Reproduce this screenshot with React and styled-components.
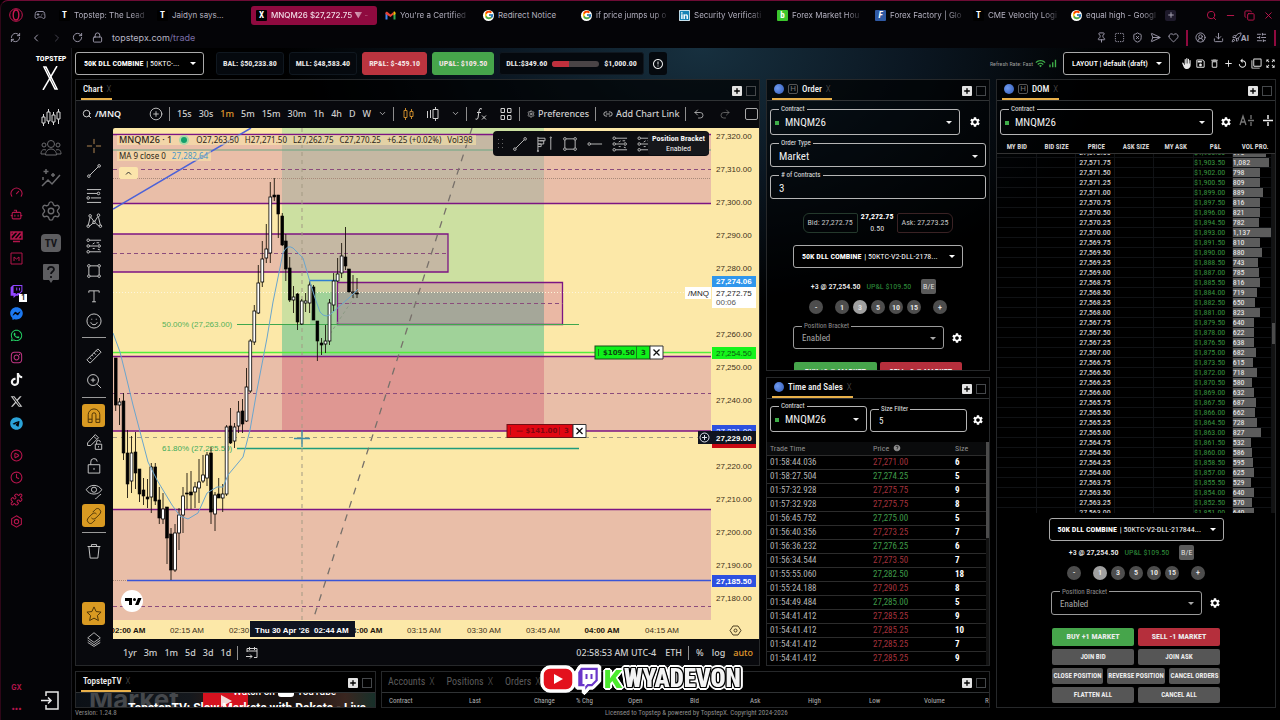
import React, { useEffect, useRef } from "react";
import styled, { createGlobalStyle, css } from "styled-components";
import {
  Search,
  Plus,
  RotateCw,
  RefreshCw,
  Lock,
  ChevronLeft,
  ChevronRight,
  ChevronDown,
  Undo2,
  Redo2,
  CirclePlus,
  Pin,
  SquareDashed,
  ShieldX,
  SendHorizontal,
  Heart,
  Download,
  Rocket,
  SlidersHorizontal,
  Minus,
  Copy,
  X,
  Link2,
  Settings,
  CircleUserRound,
  Gauge,
  Bot,
  Clock,
  CirclePlay,
  Puzzle,
  Gamepad2,
} from "lucide-react";
import {
  MdSettings,
  MdOutlineSave,
  MdDeleteOutline,
  MdAdd,
  MdReplay,
  MdFilterNone,
  MdWifi,
  MdSignalCellularAlt,
  MdHelp,
  MdErrorOutline,
  MdZoomOutMap,
  MdBackHand,
} from "react-icons/md";
import {
  FaTwitch,
  FaFacebookMessenger,
  FaWhatsapp,
  FaInstagram,
  FaTiktok,
  FaXTwitter,
  FaTelegram,
  FaLinkedin,
} from "react-icons/fa6";
import { FcGoogle } from "react-icons/fc";

const GlobalStyle = createGlobalStyle`
  * { box-sizing: border-box; }
  body {
    margin: 0;
    background: #000;
    color: #e8e8e8;
    font-family: "Roboto Condensed", Roboto, sans-serif;
    font-size: 9px;
  }
  button, input, select { font: inherit; color: inherit; }
  button { border: 0; padding: 0; background: none; cursor: pointer; }
  svg { display: block; flex: none; }
`;

const Shell = styled.div`
  height: 100vh;
  display: flex;
  flex-direction: column;
  overflow: hidden;
  background: #040407;
  border-top: 1px solid #6d0c35;
  border-left: 1px solid #2e0718;
  border-top-left-radius: 8px;
`;

// ---------- browser ----------

const TabBar = styled.nav`
  display: flex;
  align-items: center;
  height: 28px;
  padding-right: 6px;
  font-family: Inter, sans-serif;
  font-size: 8px;
`;

const TabBarStart = styled.div`
  display: flex;
  align-items: center;
  gap: 11px;
  width: 54px;
  padding-left: 8px;
  color: #8d8a9d;
`;

const BrowserTab = styled.a`
  display: flex;
  align-items: center;
  gap: 4px;
  height: 19px;
  flex: none;
  width: ${(p) => (p.$active ? 126 : 98)}px;
  margin-right: ${(p) => (p.$active ? 4 : 0)}px;
  padding: 0 4px 0 ${(p) => (p.$active ? 5 : 4)}px;
  border-radius: 3px;
  color: ${(p) => (p.$active ? "#f1dbe5" : "#b3b0bf")};
  background: ${(p) => (p.$active ? "#8f0a3f" : "transparent")};
  text-decoration: none;
  font-weight: ${(p) => (p.$active ? 500 : 400)};
`;

const TabTitle = styled.span`
  white-space: nowrap;
  ${(p) =>
    p.$fade &&
    css`
      mask-image: linear-gradient(90deg, #000 80%, rgba(0, 0, 0, 0.25));
    `}
`;

const Favicon = styled.span`
  display: grid;
  place-items: center;
  flex: none;
  width: 11px;
  height: 11px;
  border-radius: ${(p) => (p.$round ? "50%" : "1px")};
  background: ${(p) => p.$bg || "#000"};
  color: #fff;
  font: 700 9px/11px "Roboto Condensed", sans-serif;
`;

const NewTab = styled.button`
  display: grid;
  place-items: center;
  width: 11px;
  height: 11px;
  border-radius: 2px;
  background: #1e1a2b;
  color: #a7a4b4;
`;

const WindowButtons = styled.div`
  display: flex;
  gap: 8px;
  margin-left: auto;
  color: #c41650;
`;

const AddressBar = styled.div`
  display: flex;
  align-items: center;
  height: 19px;
  padding: 0 4px 2px 9px;
  font-family: Inter, sans-serif;
  font-size: 9px;
  color: #a3a0b1;
`;

const NavButtons = styled.div`
  display: flex;
  align-items: center;
  gap: 9px;
`;

const Address = styled.div`
  margin-left: 9px;
  font-size: 9px;
  color: #b7b4c4;
  span { color: #7a6ea6; }
`;

const Extensions = styled.div`
  display: flex;
  align-items: center;
  gap: 7px;
  margin-left: auto;
  b { margin-left: -8px; font-size: 8px; }
`;

const RedBar = styled.i`
  width: 2px;
  height: 16px;
  background: #8f0a3f;
`;

const Body = styled.div`
  flex: 1;
  min-height: 0;
  display: flex;
`;

const OperaRail = styled.aside`
  display: flex;
  flex-direction: column;
  align-items: center;
  width: 31px;
  padding-top: 138px;
  color: #b3154b;
`;

const RailGroup = styled.div`
  display: flex;
  flex-direction: column;
  align-items: center;
  gap: 9px;
  margin-bottom: ${(p) => p.$after || 0}px;
  svg { width: 13px; height: 13px; }
`;

const RailFoot = styled.div`
  margin-top: auto;
  padding-bottom: 1px;
  text-align: center;
  font: 700 7px/21px Inter, sans-serif;
`;

const TwitchBadge = styled.span`
  position: relative;
  color: #9146ff;
  b {
    position: absolute;
    right: -4px;
    bottom: -4px;
    width: 8px;
    background: #fff;
    color: #222;
    text-align: center;
    font: 700 7px/8px Inter, sans-serif;
  }
`;

// ---------- topstep app ----------

const TopstepRail = styled.aside`
  display: flex;
  flex-direction: column;
  align-items: center;
  width: 40px;
  padding: 6px 1px 10px 0;
  border-right: 1px solid #1b1b20;
  color: #6b6b6e;
`;

const Brand = styled.div`
  color: #fff;
  text-align: center;
  font-weight: 700;
  font-size: 8px;
  line-height: 10px;
  margin-bottom: 16px;
  svg { margin: 2px auto 0; }
`;

const RailIcons = styled.div`
  display: flex;
  flex-direction: column;
  align-items: center;
  gap: 10px;
`;

const TvBox = styled.span`
  display: grid;
  place-items: center;
  width: 20px;
  height: 18px;
  margin: 2px 0;
  border-radius: 4px;
  background: #5d5d60;
  color: #16161a;
  font-weight: 700;
  font-size: 11px;
`;

const ExitButton = styled.button`
  margin-top: auto;
  margin-right: 4px;
  color: #e8e8e8;
`;

const Main = styled.main`
  flex: 1;
  min-width: 0;
  display: flex;
  flex-direction: column;
  padding-left: 3px;
  padding-right: 4px;
  background: radial-gradient(ellipse 420px 260px at 52% 0, #17303f 0, #0b1722 50%, #000 100%);
`;

const TopBar = styled.header`
  display: flex;
  align-items: center;
  height: 31px;
  font-weight: 700;
  font-size: 8px;
`;

const PickerBox = styled.div`
  display: flex;
  align-items: center;
  flex: none;
  width: ${(p) => p.$w}px;
  height: 23px;
  padding: 0 7px 0 8px;
  border: 1px solid #a9a9a9;
  border-radius: 3px;
  background: #000;
  color: #fff;
  font-size: 8px;
  font-weight: ${(p) => p.$weight || "inherit"};
  label { font-weight: 700; margin-right: 3px; white-space: nowrap; }
`;

const PlainSelect = styled.select`
  flex: 1;
  min-width: 0;
  padding: 0;
  border: 0;
  outline: 0;
  appearance: none;
  background: transparent;
  text-overflow: ellipsis;
  option { background: #111; }
`;

const Caret = styled.i`
  flex: none;
  border: 3px solid transparent;
  border-top-color: currentColor;
  border-bottom: 0;
`;

const Stats = styled.div`
  display: flex;
  gap: 5px;
  margin-left: 12px;
`;

const Stat = styled.div`
  display: flex;
  align-items: center;
  gap: 5px;
  height: 23px;
  padding: 0 6px;
  border-radius: 3px;
  border: 1px solid ${(p) => p.$bg || "#101820"};
  background: ${(p) => p.$bg || "#05090e"};
  color: ${(p) => (p.$bg ? "#f4e4e4" : "#e8e8e8")};
  white-space: nowrap;
`;

const LimitsButton = styled.button`
  display: grid;
  place-items: center;
  width: 18px;
  height: 23px;
  border-radius: 3px;
  background: #05090e;
`;

const LossBar = styled.div`
  width: 47px;
  height: 6px;
  border-radius: 3px;
  overflow: hidden;
  background: #4a4446;
  i {
    display: block;
    height: 100%;
    background: #c0303d;
  }
`;

const Refresh = styled.div`
  display: flex;
  align-items: center;
  gap: 1px;
  margin-left: auto;
  margin-right: 5px;
  color: #3fae49;
  span { color: #9c9c9c; font-size: 6px; font-weight: 400; margin-right: 1px; }
`;

const TopActions = styled.div`
  display: flex;
  gap: 3px;
  margin-left: 11px;
  color: #e8e8e8;
`;

const Workspace = styled.div`
  flex: 1;
  min-height: 0;
  display: grid;
  grid-template-columns: minmax(0, 1fr) 280px;
  gap: 6px;
`;

const LeftSide = styled.div`
  display: grid;
  grid-template-rows: minmax(0, 1fr) 37px;
  gap: 5px;
  min-height: 0;
`;

const UpperRow = styled.div`
  display: grid;
  grid-template-columns: minmax(0, 1fr) 224px;
  gap: 6px;
  min-height: 0;
`;

const SideColumn = styled.div`
  display: grid;
  grid-template-rows: minmax(0, 292fr) minmax(0, 289fr);
  gap: 6px;
  min-height: 0;
`;

const LowerRow = styled.div`
  display: grid;
  grid-template-columns: 301px minmax(0, 1fr);
  gap: 5px;
  min-height: 0;
`;

const Panel = styled.section`
  display: flex;
  flex-direction: column;
  min-height: 0;
  min-width: 0;
  overflow: hidden;
  border: 1px solid #26282a;
  background: rgba(0, 0, 0, 0.55);
`;

const PanelTabs = styled.div`
  display: flex;
  flex: none;
  align-items: stretch;
  height: 21px;
  padding: 0 3px 0 5px;
  border-bottom: 1px solid #303335;
  background: rgba(0, 0, 0, 0.3);
  font-family: "Roboto Condensed", Roboto, sans-serif;
`;

const PanelTab = styled.button`
  display: flex;
  align-items: center;
  gap: 4px;
  padding: 0 1px 0 ${(p) => (p.$plain ? 1 : 2)}px;
  margin-right: ${(p) => (p.$plain ? 10 : 0)}px;
  border-bottom: 2px solid ${(p) => (p.$plain ? "transparent" : "#e8b04a")};
  color: ${(p) => (p.$plain ? "#5a5a5a" : "#f2f2f2")};
  font-size: ${(p) => (p.$plain ? 10 : 9)}px;
  font-weight: ${(p) => (p.$plain ? 400 : 500)};
  em { color: #555; font-style: normal; font-weight: 300; }
`;

const BlueDot = styled.i`
  width: 10px;
  height: 10px;
  border-radius: 50%;
  background: radial-gradient(circle at 35% 40%, #6f9bf0, #2f57b4);
`;

const HBox = styled.i`
  width: 10px;
  height: 10px;
  border: 1px solid #555;
  border-radius: 2px;
  color: #777;
  font: 400 8px/8px Roboto, sans-serif;
  text-align: center;
`;

const PanelButtons = styled.div`
  display: flex;
  align-items: center;
  gap: 4px;
  margin-left: auto;
  padding-top: 1px;
`;

const AddWidget = styled.button`
  display: grid;
  place-items: center;
  width: 10px;
  height: 10px;
  border-radius: 1px;
  background: #e3e3e3;
  color: #000;
`;

const Maximize = styled.button`
  width: 10px;
  height: 10px;
  border: 1px solid #45484b;
`;

// ---------- chart ----------

const ChartPanel = styled(Panel)`
  font-family: "Noto Sans", "Open Sans", sans-serif;
`;

const ChartToolbar = styled.div`
  display: flex;
  align-items: center;
  flex: none;
  height: 27px;
  padding: 0 1px 2px 6px;
  background: #08090d;
  color: #cfcfcf;
  font-size: 9px;
  font-weight: 500;
`;

const ToolbarGroup = styled.div`
  display: flex;
  align-items: center;
  gap: ${(p) => p.$gap || 8}px;
  ${(p) =>
    p.$line &&
    css`
      border-left: 1px solid #8d8d8d;
      height: 14px;
      padding-left: 7px;
      margin-left: 6px;
    `}
`;

const TextButton = styled.button`
  display: flex;
  align-items: center;
  gap: 3px;
  white-space: nowrap;
  color: ${(p) => (p.$on ? "#e09b2d" : "inherit")};
`;

const SymbolButton = styled(TextButton)`
  width: 67px;
  color: #f2f2f2;
  font-weight: 600;
`;

const ScreenBox = styled.button`
  width: 13px;
  height: 12px;
  margin-left: auto;
  border: 1px solid #a8a8a8;
  border-radius: 2px;
`;

const ChartBody = styled.div`
  flex: 1;
  min-height: 0;
  display: flex;
  background: #08090d;
`;

const DrawTools = styled.div`
  display: flex;
  flex-direction: column;
  align-items: center;
  width: 37px;
  flex: none;
  padding: 5px 2px 0 0;
  color: #c9c9c9;
`;

const DrawTool = styled.button`
  display: grid;
  place-items: center;
  flex: none;
  width: 23px;
  height: 23px;
  margin: 1px 0;
  border-radius: 3px;
  background: ${(p) => (p.$on ? "#d99a22" : "transparent")};
  color: ${(p) => (p.$on ? "#4a3206" : "inherit")};
`;

const DrawLine = styled.hr`
  flex: none;
  width: 24px;
  margin: 4px 0 5px;
  border: 0;
  border-top: 1px solid #9a9a9a;
`;

const ToolSpace = styled.div`
  height: 38px;
  flex: none;
`;

const ChartColumn = styled.div`
  flex: 1;
  min-width: 0;
  display: flex;
  flex-direction: column;
`;

const Plot = styled.div`
  position: relative;
  flex: 1;
  min-height: 0;
  overflow: hidden;
  background: #fce8a8;
  border-top-left-radius: 2px;
`;

const Legend = styled.div`
  position: absolute;
  top: 7px;
  left: 4px;
  color: #2b2417;
  font-size: 8px;
  line-height: 10px;
  white-space: nowrap;
`;

const LegendRow = styled.div`
  display: flex;
  align-items: center;
  gap: 6px;
  width: max-content;
  padding: 0 3px 0 2px;
  margin-bottom: 6px;
  background: rgba(252, 232, 168, 0.55);
  b { font-size: 9px; font-weight: 500; }
  i { width: 6px; height: 6px; margin: 0 3px; border-radius: 50%; background: #13a06b; box-shadow: 0 0 0 2px #a8d8a8; }
  em { font-style: normal; color: #4a98c8; }
`;

const CollapseLegend = styled.button`
  display: grid;
  place-items: center;
  width: 19px;
  height: 12px;
  margin-left: 2px;
  border-radius: 2px;
  background: #fbe5ab;
  color: #333;
`;

const FloatingTools = styled.div`
  position: absolute;
  top: 3px;
  left: 380px;
  display: flex;
  align-items: center;
  gap: 7px;
  width: 216px;
  height: 25px;
  padding: 0 5px;
  border-radius: 4px;
  background: #0b0c10;
  color: #b9b9b9;
`;

const Tooltip = styled.div`
  position: absolute;
  right: 0;
  top: 1px;
  width: 61px;
  height: 23px;
  padding-top: 2px;
  border-radius: 3px;
  background: #16171b;
  color: #f2f2f2;
  text-align: center;
  font: 400 8px/10px "Roboto Condensed", sans-serif;
  b { display: block; font-size: 8px; }
`;

const RangeBar = styled.div`
  display: flex;
  align-items: center;
  flex: none;
  height: 26px;
  padding: 1px 6px 0 10px;
  color: #cfcfcf;
  font-size: 9px;
  font-weight: 500;
`;

const RangeEnd = styled(ToolbarGroup)`
  margin-left: auto;
  gap: 9px;
`;

// ---------- order / forms ----------

const FieldBox = styled.fieldset`
  flex: 1;
  min-width: 0;
  height: ${(p) => (p.$short ? 27 : 30)}px;
  margin: 0;
  padding: 0 7px 0 8px;
  border: 1px solid ${(p) => (p.$dim ? "#9a9a9a" : "#b5b5b5")};
  border-radius: 3px;
  color: ${(p) => (p.$dim ? "#a9a9a9" : "#f0f0f0")};
  legend {
    height: 8px;
    margin: 0;
    padding: 0 2px;
    font-size: 7px;
    line-height: 8px;
    color: ${(p) => (p.$dim ? "#8c8c8c" : "#e3e3e3")};
  }
`;

const FieldRow = styled.div`
  display: flex;
  align-items: center;
  height: ${(p) => (p.$short ? 16 : 19)}px;
  font-size: ${(p) => p.$size || 11}px;
`;

const PlainInput = styled.input`
  width: 100%;
  padding: 0;
  border: 0;
  outline: 0;
  background: transparent;
`;

const GreenSquare = styled.i`
  width: 4px;
  height: 4px;
  margin: 0 6px 0 -4px;
  background: #3fae49;
`;

const FormLine = styled.div`
  display: flex;
  align-items: center;
  justify-content: ${(p) => p.$justify || "center"};
  gap: ${(p) => p.$gap || 0}px;
`;

const GearButton = styled.button`
  flex: none;
  color: #fff;
  padding-top: 4px;
  margin-right: ${(p) => p.$end || 0}px;
`;

const OrderForm = styled.div`
  display: flex;
  flex-direction: column;
  flex: none;
  gap: 4px;
  padding: 4px 3px 0;
`;

const Quote = styled.div`
  height: 20px;
  padding: 0 4px;
  border: 1px solid ${(p) => (p.$ask ? "#3a2224" : "#24392c")};
  border-radius: ${(p) => (p.$ask ? "2px 6px 6px 2px" : "6px 2px 2px 6px")};
  color: #c6c6c6;
  font-size: 8px;
  line-height: 18px;
  white-space: nowrap;
`;

const LastPrice = styled.div`
  text-align: center;
  font-size: 8px;
  line-height: 12px;
  color: #ddd;
  b { display: block; color: #fff; }
`;

const PositionText = styled.div`
  color: #f2f2f2;
  font-size: 8px;
  font-weight: 500;
  white-space: nowrap;
`;

const OpenPnl = styled.div`
  color: #2f8f3c;
  font-size: 8px;
  white-space: nowrap;
`;

const BreakEven = styled.button`
  width: 15px;
  height: 15px;
  margin: 0 9px 0 4px;
  border-radius: 2px;
  background: #5a5a5a;
  color: #ddd;
  font-size: 8px;
`;

const QtyButton = styled.button`
  width: 14px;
  height: 14px;
  border-radius: 50%;
  background: ${(p) => (p.$on ? "#a0a0a0" : "#4d4d4d")};
  color: #e8e8e8;
  font-size: 8px;
  font-weight: 600;
  text-align: center;
  margin-left: ${(p) => (p.$plus ? 8 : 0)}px;
  margin-right: ${(p) => (p.$minus ? 8 : 0)}px;
`;

const ActionButton = styled.button`
  flex: ${(p) => p.$grow || "1 1 0"};
  height: ${(p) => (p.$bg ? 18 : 16)}px;
  border-radius: 2px;
  background: ${(p) => p.$bg || "#565656"};
  color: #ececec;
  font-size: ${(p) => (p.$bg ? 8 : 7)}px;
  font-weight: 700;
  white-space: nowrap;
`;

const Limited = styled.div`
  display: flex;
  flex-direction: column;
  align-self: center;
  gap: ${(p) => p.$gap || 0}px;
  width: ${(p) => p.$w}px;
  margin-top: ${(p) => p.$mt || 0}px;
  flex: none;
`;

// ---------- time and sales ----------

const SalesTop = styled.div`
  display: flex;
  align-items: flex-end;
  gap: 3px;
  padding: 3px 5px 0 3px;
  button { margin: 0 0 6px 2px; }
`;

const SalesArea = styled.div`
  display: flex;
  flex: 1;
  min-height: 0;
  margin-top: 10px;
`;

const SalesTable = styled.table`
  flex: 1;
  border-collapse: collapse;
  align-self: flex-start;
  table-layout: fixed;
  th, td {
    padding: 0 0 0 3px;
    text-align: left;
    border-bottom: 1px solid #2c2c2c;
  }
  th { height: 13px; background: #0a0b0c; color: #8f8f8f; font-size: 8px; font-weight: 400; }
  th span { display: inline-flex; align-items: center; gap: 4px; }
  td { height: 14px; line-height: 12px; color: #b3b3b3; }
  td:last-child { color: #fff; font-weight: 700; }
  tr > *:first-child { width: 103px; }
  tr > *:nth-child(2) { width: 82px; }
`;

const SalesPrice = styled.td`
  && { color: ${(p) => (p.$up ? "#3f9a48" : "#a3323c")}; }
`;

const ScrollTrack = styled.div`
  width: 3px;
  background: #131313;
  padding-top: ${(p) => p.$top || 0}px;
  i {
    display: block;
    height: ${(p) => p.$thumb}px;
    background: #4b4b4b;
  }
`;

// ---------- DOM ----------

const DomTop = styled.div`
  display: flex;
  align-items: center;
  gap: 7px;
  padding: 4px 0 0 3px;
`;

const DomHead = styled.table`
  width: 100%;
  margin-top: 8px;
  table-layout: fixed;
  border-collapse: collapse;
  th { height: 10px; padding: 0; font-size: 7px; line-height: 9px; color: #d6d6d6; border-bottom: 1px solid #333; }
`;

const DomScroll = styled.div`
  display: flex;
  flex: none;
  height: 359px;
`;

const DomView = styled.div`
  flex: 1;
  overflow: hidden;
`;

const DomTable = styled.table`
  width: 100%;
  table-layout: fixed;
  border-collapse: collapse;
  td {
    height: 10px;
    padding: 0;
    border: 1px solid #101215;
    border-left: 0;
    font-size: 8px;
    line-height: 9px;
    text-align: center;
    color: #e6e6e6;
  }
`;

const Pnl = styled.div`
  padding-right: 6px;
  color: #37913f;
`;

const Volume = styled.div`
  background: #5c5c5c;
  color: #f0f0f0;
  text-align: left;
  height: 9px;
  white-space: nowrap;
`;

// ---------- bottom ----------

const VideoStrip = styled.div`
  position: relative;
  flex: 1;
  overflow: hidden;
  background: linear-gradient(90deg, #0b1016 0, #14181d 38%, #261a17 46%, #15100f 70%, #3a2620 90%, #17302a);
`;

const VideoGhost = styled.div`
  position: absolute;
  left: 13px;
  top: -6px;
  color: #45484c;
  font: 700 26px/26px Inter, sans-serif;
`;

const VideoPlay = styled.div`
  position: absolute;
  left: 127px;
  top: 0;
  display: grid;
  place-items: center;
  width: 45px;
  height: 16px;
  background: #d5121f;
`;

const VideoTitle = styled.div`
  position: absolute;
  left: 52px;
  top: 8px;
  color: #fff;
  font: 700 12px/14px Roboto, sans-serif;
  white-space: nowrap;
`;

const WatchOn = styled.div`
  position: absolute;
  left: 157px;
  top: -8px;
  display: flex;
  align-items: center;
  gap: 3px;
  color: #fff;
  font: 500 10px/13px Roboto, sans-serif;
  i { width: 16px; height: 11px; border-radius: 3px; background: #fff; }
`;

const AccountsTable = styled.table`
  width: 100%;
  border-collapse: collapse;
  table-layout: fixed;
  th { padding: 0 0 0 7px; height: 16px; font-size: 7px; font-weight: 400; color: #b0b0b0; text-align: left; }
`;

const Footer = styled.footer`
  display: grid;
  grid-template-columns: auto 1fr;
  flex: none;
  height: 12px;
  color: #8d8d8d;
  font-size: 7px;
  line-height: 11px;
  span:last-child { text-align: center; }
`;

const Watermark = styled.div`
  position: fixed;
  left: 542px;
  top: 664px;
  display: flex;
  align-items: center;
  height: 30px;
  font: 900 25px/30px "Roboto Condensed", Roboto, sans-serif;
  filter: drop-shadow(1px 1px 0 #fff) drop-shadow(-1px -1px 0 #fff) drop-shadow(1px -1px 0 #fff) drop-shadow(-1px 1px 0 #fff);
`;

const WatermarkK = styled.span`
  margin: 0 1px 0 3px;
  color: #4bea2d;
  font: 900 25px/30px Inter, sans-serif;
`;

const WatermarkText = styled.span`
  color: #f4f4f4;
  text-shadow: 1px 0 #000, -1px 0 #000, 0 1px #000, 0 -1px #000, 1px 1px #000, -1px -1px #000, 1px -1px #000, -1px 1px #000;
`;

// ---------- data ----------

const tabsBefore = [
  { icon: "T", title: "Topstep: The Lead", fade: true },
  { icon: "T", title: "Jaidyn says..." },
];

const tabsAfter = [
  { icon: "M", title: "You're a Certified", fade: true },
  { icon: "G", title: "Redirect Notice" },
  { icon: "G", title: "if price jumps up o", fade: true },
  { icon: "in", title: "Security Verificati", fade: true },
  { icon: "b", title: "Forex Market Hou", fade: true },
  { icon: "F", title: "Forex Factory | Glo", fade: true },
  { icon: "T", title: "CME Velocity Logi", fade: true },
  { icon: "G", title: "equal high - Googl", fade: true },
];

const trades = [
  ["01:58:44.036", "27,271.00", 6, 0],
  ["01:58:27.504", "27,274.25", 5, 1],
  ["01:57:32.928", "27,275.75", 9, 0],
  ["01:57:32.928", "27,275.75", 8, 0],
  ["01:56:45.752", "27,275.00", 5, 1],
  ["01:56:40.356", "27,273.25", 7, 0],
  ["01:56:36.232", "27,276.25", 6, 1],
  ["01:56:34.544", "27,273.50", 7, 0],
  ["01:55:55.060", "27,282.50", 18, 1],
  ["01:55:24.188", "27,290.25", 8, 0],
  ["01:54:49.484", "27,285.00", 5, 1],
  ["01:54:41.412", "27,285.25", 9, 0],
  ["01:54:41.412", "27,285.25", 10, 0],
  ["01:54:41.412", "27,285.25", 7, 0],
  ["01:54:41.412", "27,285.25", 9, 0],
];

const volumes = [
  975, 1082, 798, 809, 889, 816, 821, 782, 1137, 810, 880, 743, 785, 816, 719,
  650, 823, 640, 622, 638, 682, 615, 718, 580, 632, 687, 662, 728, 827, 532,
  586, 595, 625, 529, 640, 570, 640,
];

const money = (n) =>
  n.toLocaleString("en-US", { minimumFractionDigits: 2, maximumFractionDigits: 2 });

const ladder = volumes.map((volume, i) => ({
  price: money(27572 - i * 0.25),
  pnl: "$" + money(1905 - i * 1.5),
  volume,
}));

// x, high, top of body, bottom of body, low, filled
const candles = [
  [115.7, 358, 358, 405, 411, 1], [119.5, 398, 402, 405, 425, 0],
  [123.5, 393, 401, 453, 460, 1], [127.5, 430, 453, 484, 498, 1],
  [131.5, 436, 453, 481, 493, 0], [135.5, 432, 452, 473, 489, 1],
  [139.5, 469, 469, 494, 502, 1], [143.5, 478, 490, 496, 505, 1],
  [147.5, 479, 497, 499, 508, 1], [151.3, 463, 467, 497, 513, 0],
  [155.3, 463, 467, 501, 505, 1], [159.3, 487, 500, 518, 524, 1],
  [163, 493, 509, 519, 524, 0], [167, 507, 507, 538, 564, 1],
  [171, 528, 534, 570, 580, 1], [175, 524, 533, 570, 572, 0],
  [179, 508, 515, 533, 550, 0], [183, 487, 496, 515, 533, 0],
  [187, 473, 493, 494, 509, 1], [191, 471, 492, 495, 509, 1],
  [195, 482, 487, 492, 508, 0], [199, 459, 482, 488, 503, 0],
  [203, 455, 475, 481, 483, 0], [207, 452, 455, 478, 486, 0],
  [211, 447, 453, 512, 524, 1], [215, 492, 495, 514, 531, 0],
  [218.7, 478, 494, 498, 498, 1], [222.7, 484, 494, 498, 512, 0],
  [226.6, 425, 427, 494, 496, 0], [230.5, 408, 426, 443, 444, 1],
  [234.5, 423, 427, 441, 448, 0], [238.5, 401, 412, 426, 433, 0],
  [242.5, 399, 411, 424, 433, 1], [246.5, 368, 387, 421, 422, 0],
  [250.3, 339, 341, 391, 393, 0], [254.3, 305, 311, 342, 345, 0],
  [258.3, 265, 283, 313, 314, 0], [262.3, 241, 259, 282, 287, 0],
  [266.3, 224, 249, 258, 263, 0], [270.3, 182, 197, 253, 263, 0],
  [274.3, 178, 195, 197, 201, 1], [278.3, 195, 195, 214, 238, 1],
  [282.3, 213, 216, 245, 246, 1], [285.8, 234, 241, 269, 281, 1],
  [289.7, 257, 268, 300, 302, 1], [293.5, 286, 297, 300, 313, 0],
  [297.5, 293, 294, 322, 330, 1], [301.7, 299, 301, 324, 325, 0],
  [305.6, 293, 301, 303, 312, 0], [309.6, 281, 285, 303, 313, 0],
  [313.5, 285, 287, 320, 320, 1], [317.4, 321, 321, 341, 361, 1],
  [321.5, 338, 343, 345, 355, 1], [325.5, 325, 341, 344, 353, 0],
  [329.5, 299, 303, 341, 345, 0], [333.6, 273, 281, 305, 311, 0],
  [337.6, 258, 274, 281, 282, 0], [341.6, 243, 256, 273, 278, 0],
  [345.5, 227, 257, 266, 270, 1], [349, 269, 269, 292, 292, 1],
  [353, 275, 292, 293, 298, 0], [357, 278, 293, 294, 298, 1],
];

const priceTicks = [
  [320, 136], [310, 169], [300, 202], [290, 235], [280, 268], [260, 334],
  [250, 367], [240, 400], [220, 466], [210, 499], [200, 532], [190, 565], [180, 598],
];

const timeTicks = [
  [128, "02:00 AM", 1], [187, "02:15 AM"], [246, "02:30 AM"], [365, "03:00 AM", 1],
  [424, "03:15 AM"], [484, "03:30 AM"], [543, "03:45 AM"], [602, "04:00 AM", 1], [662, "04:15 AM"],
];

const drawPaths = {
  cross: "M14 3v8M14 17v8M3 14h8M17 14h8",
  trend: "M7.4 20.6 20.6 7.4M4 22a2 2 0 1 0 4 0 2 2 0 1 0-4 0M20 6a2 2 0 1 0 4 0 2 2 0 1 0-4 0",
  fib: "M3 4h22M3 10h16M9 17h16M3 24h22M19 10a2 2 0 1 0 4 0 2 2 0 1 0-4 0M3 17a2 2 0 1 0 4 0 2 2 0 1 0-4 0",
  pattern: "M5 21 8 8M9 8l5 7M15 15l5-8M21 8l3 13M7 22l6-5M16 17l6 5M3 22a2 2 0 1 0 4 0 2 2 0 1 0-4 0M6 6a2 2 0 1 0 4 0 2 2 0 1 0-4 0M12 16a2 2 0 1 0 4 0 2 2 0 1 0-4 0M19 5a2 2 0 1 0 4 0 2 2 0 1 0-4 0M22 22a2 2 0 1 0 4 0 2 2 0 1 0-4 0",
  channel: "M7 5h18M7 14h12M7 23h18M3 5a2 2 0 1 0 4 0 2 2 0 1 0-4 0M3 14a2 2 0 1 0 4 0 2 2 0 1 0-4 0M3 23a2 2 0 1 0 4 0 2 2 0 1 0-4 0M20 14a2 2 0 1 0 4 0 2 2 0 1 0-4 0M12 11l3-2M18 9h4M12 18h3M20 19l3 1",
  rect: "M8 6h12M8 22h12M6 8v12M22 8v12M4 6a2 2 0 1 0 4 0 2 2 0 1 0-4 0M20 6a2 2 0 1 0 4 0 2 2 0 1 0-4 0M4 22a2 2 0 1 0 4 0 2 2 0 1 0-4 0M20 22a2 2 0 1 0 4 0 2 2 0 1 0-4 0",
  text: "M6 9V6h16v3M14 6v17M11 23h6",
  smile: "M3 14a11 11 0 1 0 22 0 11 11 0 1 0-22 0M9 16c1 5 9 5 10 0M10.5 10.500v1.500M17.500 10.500v1.500",
  ruler: "M3 20 20 3l5 5L8 25zM7 16l3 3M10.500 12.500l2 2M14 9l3 3M17.500 5.500l2 2",
  zoom: "M4 12.500a8.500 8.500 0 1 0 17 0 8.500 8.500 0 1 0-17 0M19 19l6 6M12.500 9v7M9 12.500h7",
  magnet: "M5 24V12a9 9 0 0 1 18 0v12h-6V12a3 3 0 0 0-6 0v12zM5 19h6M17 19h6",
  pencilLock: "M4 17 16 4l5 5L9 21H4zM14 7l4 4M16 19h10v8H16zM18 19v-3a3 3 0 0 1 6 0M21 22v2",
  lock: "M5 12h18v13H5zM9 12V8a5 5 0 0 1 10-1M14 17v3",
  eye: "M2 12C7 3 21 3 26 12 21 21 7 21 2 12M10 12a4 4 0 1 0 8 0 4 4 0 1 0-8 0M18 25l4-4M22 21l3-2M18 25l-2 1",
  link: "m12 8 4-4a4.500 4.500 0 0 1 7 0 5 5 0 0 1 0 7l-6 6a4.500 4.500 0 0 1-7 0M16 20l-4 4a4.500 4.500 0 0 1-7 0 5 5 0 0 1 0-7l6-6a4.500 4.500 0 0 1 7 0",
  trash: "M4 7h20M10 7V4h8v3M6 7l2 18h12l2-18",
  star: "m14 3 3.300 7.200 7.700.9-5.700 5.300 1.500 7.800L14 20.400l-6.800 3.800 1.500-7.800L3 11.100l7.700-.9z",
  layers: "M14 3 25 12 14 20 3 12zM3 16l11 8 11-8M3 20l11 7 11-7",
  profile: "M3 3v22M3 5h11v4H3M6 9h6v5H3M3 14h5v4H3M23 5v18M22 4a1 1 0 1 0 2 0 1 1 0 1 0-2 0M2 25a1 1 0 1 0 2 0 1 1 0 1 0-2 0",
  ray: "M7 14h18M3 14a2 2 0 1 0 4 0 2 2 0 1 0-4 0",
};

const DrawIcon = ({ name, size = 18, color = "currentColor" }) => (
  <svg width={size} height={size} viewBox="0 0 28 28" fill="none" stroke={color} strokeWidth="1.5">
    <path d={drawPaths[name]} />
  </svg>
);

const BarsIcon = () => (
  <svg width="14" height="14" viewBox="0 0 14 14" fill="none" stroke="#c8892a">
    <path d="M4.500 1v2M4.500 11v2M3 3.500h3v7H3zM10.500 2v2M10.500 10v2M9 4.500h3v5H9z" />
  </svg>
);

const CandleIcon = () => (
  <svg width="14" height="14" viewBox="0 0 14 14" fill="none" stroke="currentColor">
    <path d="M9.500 0v2M9.500 12v2M7 2.500h5v9H7zM1.500 4v7M4.500 3v8" />
  </svg>
);

const PanelControls = () => (
  <PanelButtons>
    <AddWidget aria-label="Add widget">
      <Plus size={8} strokeWidth={4} />
    </AddWidget>
    <Maximize aria-label="Maximize" />
  </PanelButtons>
);

const TabIcon = ({ kind }) => {
  if (kind === "G")
    return (
      <Favicon $round $bg="#fff">
        <FcGoogle size={10} />
      </Favicon>
    );
  if (kind === "M")
    return (
      <svg width="11" height="9" viewBox="0 0 22 18">
        <path d="M1 4v13h4V7z" fill="#4285f4" />
        <path d="M21 4v13h-4V7z" fill="#34a853" />
        <path d="M1 4c0-3 3-3 4-2l6 5 6-5v5l-6 5L1 6z" fill="#ea4335" />
        <path d="M17 2c2-2 4 0 4 2v2l-4 3z" fill="#fbbc04" />
      </svg>
    );
  if (kind === "in")
    return (
      <Favicon $bg="#fff">
        <FaLinkedin size={11} color="#1683b5" />
      </Favicon>
    );
  if (kind === "b") return <Favicon $bg="#3bc62c">b</Favicon>;
  if (kind === "F")
    return (
      <Favicon $bg="#2f59a3">
        <i>F</i>
      </Favicon>
    );
  return <Favicon>{kind}</Favicon>;
};

const BrowserTop = () => (
  <>
    <TabBar>
      <TabBarStart>
        <svg width="14" height="14" viewBox="0 0 14 14" fill="none" stroke="#c41650">
          <circle cx="7" cy="7" r="6.300" />
          <ellipse cx="7" cy="7" rx="2.800" ry="5" strokeWidth="1.400" />
        </svg>
        <Gamepad2 size={12} strokeWidth={2} />
      </TabBarStart>
      {tabsBefore.map((tab) => (
        <BrowserTab href="#" key={tab.title}>
          <TabIcon kind={tab.icon} />
          <TabTitle $fade={tab.fade}>{tab.title}</TabTitle>
        </BrowserTab>
      ))}
      <BrowserTab href="#" $active>
        <TabIcon kind="X" />
        <TabTitle $fade>MNQM26 $27,272.75 ▼ -</TabTitle>
      </BrowserTab>
      {tabsAfter.map((tab) => (
        <BrowserTab href="#" key={tab.title}>
          <TabIcon kind={tab.icon} />
          <TabTitle $fade={tab.fade}>{tab.title}</TabTitle>
        </BrowserTab>
      ))}
      <NewTab aria-label="New tab">
        <Plus size={8} strokeWidth={3} />
      </NewTab>
      <WindowButtons>
        <Search size={11} />
        <Minus size={11} />
        <Copy size={11} />
        <X size={11} />
      </WindowButtons>
    </TabBar>
    <AddressBar>
      <NavButtons>
        <RefreshCw size={11} />
        <ChevronLeft size={12} />
        <ChevronRight size={12} color="#45434f" />
        <RotateCw size={11} />
        <Lock size={11} />
      </NavButtons>
      <Address>
        topstepx.com<span>/trade</span>
      </Address>
      <Extensions>
        <Pin size={11} />
        <SquareDashed size={11} />
        <ShieldX size={11} />
        <SendHorizontal size={11} />
        <Heart size={11} />
        <RedBar />
        <CircleUserRound size={11} />
        <Download size={11} />
        <Rocket size={11} />
        <b>AI</b>
        <SlidersHorizontal size={11} />
        <RedBar />
      </Extensions>
    </AddressBar>
  </>
);

const OperaSidebar = () => (
  <OperaRail>
    <RailGroup $after={20}>
      <Gauge />
      <Bot />
      <svg viewBox="0 0 13 13" fill="none" stroke="currentColor">
        <path d="M1 2h11v7H1zM3 11.500h7M1 6l4-4M3 9l6-7M7 9l5-6" strokeWidth="1.500" />
      </svg>
      <svg viewBox="0 0 13 13" fill="none" stroke="currentColor">
        <path d="M1 1h11v11H1zM4 9V5l2.500 2L9 5v4" />
      </svg>
    </RailGroup>
    <RailGroup $after={19}>
      <TwitchBadge>
        <FaTwitch />
        <b>1</b>
      </TwitchBadge>
      <FaFacebookMessenger color="#1c78f0" />
      <FaWhatsapp color="#25d366" />
      <FaInstagram color="#c13584" />
      <FaTiktok color="#f2f2f2" />
      <FaXTwitter color="#c9c9c9" />
      <FaTelegram color="#2ba3d8" />
    </RailGroup>
    <RailGroup>
      <CirclePlay />
      <Clock />
      <Puzzle />
      <svg viewBox="0 0 24 24" fill="none" stroke="currentColor" strokeWidth="2">
        <path d="M12 1.500 21 7v10l-9 5.500L3 17V7z" />
        <circle cx="12" cy="12" r="4" />
      </svg>
    </RailGroup>
    <RailFoot>
      GX
      <br />
      •••
    </RailFoot>
  </OperaRail>
);

const TopstepSidebar = () => (
  <TopstepRail>
    <Brand>
      TOPSTEP
      <svg width="17" height="24" viewBox="0 0 17 24" fill="none" stroke="#fff">
        <path d="M2 1h2l11 22h-2z" strokeWidth="1.500" />
        <path d="M15 0 1 24" strokeWidth="1.500" />
      </svg>
    </Brand>
    <RailIcons>
      <svg width="21" height="22" viewBox="0 0 21 22" fill="none" stroke="#d9d9d9">
        <path d="M2.500 8v3M2.500 17v3M1 11h3v6H1zM7.500 3v3M7.500 15v3M6 6h3v9H6zM12.500 6v3M12.500 16v3M11 9h3v7h-3zM17.500 3v3M17.500 13v5M16 6h3v7h-3z" />
      </svg>
      <svg width="22" height="20" viewBox="0 0 22 20" fill="none" stroke="currentColor">
        <circle cx="11" cy="6" r="3.500" />
        <circle cx="4" cy="7" r="2" />
        <circle cx="18" cy="7" r="2" />
        <path d="M5.500 17c0-8 11-8 11 0zM5 16H1c0-4 2-5 5-4M17 16h4c0-4-2-5-5-4" />
      </svg>
      <svg width="21" height="22" viewBox="0 0 21 22" fill="none" stroke="currentColor" strokeWidth="1.500">
        <path d="m1 18 6-6 4 4 8-9M5 1v5M2.500 3.500h5M12 5v4M10 7h4M2 9v3" />
      </svg>
      <Settings size={22} strokeWidth={1.5} />
      <TvBox>TV</TvBox>
      <svg width="18" height="20" viewBox="0 0 18 20">
        <path d="M2 0h14q1 0 1 1v14q0 1-1 1h-5l-2 3-2-3H2q-1 0-1-1V1q0-1 1-1" fill="#5d5d60" />
        <path d="M6 6c0-4 6-4 6-.5 0 2-3 2-3 4.500M9 12v2" stroke="#101014" strokeWidth="1.800" fill="none" />
      </svg>
    </RailIcons>
    <ExitButton aria-label="Log out">
      <svg width="19" height="19" viewBox="0 0 19 19" fill="none" stroke="currentColor" strokeWidth="1.500">
        <path d="M6 5V1h12v17H6v-4M1 9.500h10M8 6.500l3 3-3 3" />
      </svg>
    </ExitButton>
  </TopstepRail>
);

const AppTopBar = () => (
  <TopBar>
    <PickerBox $w={129} $weight={400}>
      <label htmlFor="account-top">50K DLL COMBINE</label>
      <PlainSelect id="account-top">
        <option>| 50KTC-...</option>
      </PlainSelect>
      <Caret />
    </PickerBox>
    <Stats>
      <Stat>BAL: $50,233.80</Stat>
      <Stat>MLL: $48,583.40</Stat>
      <Stat $bg="#bb343f">RP&L: $-459.10</Stat>
      <Stat $bg="#46a54b">UP&L: $109.50</Stat>
      <Stat>
        DLL:$349.60
        <LossBar>
          <i style={{ width: "35%" }} />
        </LossBar>
        $1,000.00
      </Stat>
      <LimitsButton aria-label="Limits">
        <MdErrorOutline size={12} />
      </LimitsButton>
    </Stats>
    <Refresh>
      <span>Refresh Rate: Fast</span>
      <MdWifi size={11} />
      <MdSignalCellularAlt size={11} />
    </Refresh>
    <PickerBox $w={107} $weight={500}>
      <PlainSelect aria-label="Layout">
        <option>LAYOUT | default (draft)</option>
      </PlainSelect>
      <Caret />
    </PickerBox>
    <TopActions>
      <MdBackHand size={11} />
      <MdOutlineSave size={11} />
      <MdDeleteOutline size={11} />
      <MdAdd size={11} />
      <MdReplay size={11} />
      <MdFilterNone size={11} />
      <MdZoomOutMap size={11} />
    </TopActions>
  </TopBar>
);

const ChartDrawing = () => (
  <svg
    width="100%"
    height="100%"
    viewBox="113 128 646 511"
    preserveAspectRatio="xMinYMin slice"
    fontFamily="'Liberation Sans', sans-serif"
    fontSize="8"
  >
    {/* long position: target and stop */}
    <rect x="282" y="128" width="262" height="228" fill="#8bd498" fillOpacity="0.42" />
    <path d="M282 324h28l3-32h231v64H282z" fill="#5fbd8e" fillOpacity="0.4" />
    <rect x="282" y="356" width="262" height="75" fill="#db6e62" fillOpacity="0.42" />

    {/* supply and demand zones */}
    <g fill="#b03aac" fillOpacity="0.24">
      <rect x="113" y="134" width="598" height="69" />
      <rect x="113" y="234" width="335" height="38" />
      <rect x="113" y="356" width="598" height="75" />
      <rect x="113" y="510" width="598" height="110" />
      <rect x="337" y="282" width="226" height="42" fill="#b42f9a" fillOpacity="0.26" />
    </g>

    <g stroke="#7c1583" fill="none" strokeWidth="1.300">
      <path d="M113 134.500h598M113 203.500h598M113 356.500h598M113 431h598M113 509.500h598" />
      <path d="M113 234h335v38H113M337.500 282.500h225v42h-225z" />
    </g>
    <g stroke="#8b4c7c" strokeDasharray="4 3">
      <path d="M113 169.500h598M113 253.500h335M338 303.500h225M113 393.500h598M113 606.500h598" />
    </g>
    <path d="M113 178.500h598M113 580.500h14" stroke="#a88a79" strokeDasharray="1 1" />
    <path d="M113 150h598" stroke="#6aa583" />
    <path d="M113 292.500h598" stroke="#fdf6dc" strokeDasharray="1 2" />
    <path d="M113 352.500h598" stroke="#53ee3c" strokeWidth="1.500" />
    <path d="M237 324.500h342" stroke="#3fa74d" />
    <path d="M237 448.500h342" stroke="#1f9c7c" strokeWidth="1.300" />
    <path d="M127 580.500h584" stroke="#3a55d6" strokeWidth="1.400" />
    <path d="M113 209 251 128" stroke="#4c62d8" strokeWidth="1.500" />
    <path d="M309 280.500h28" stroke="#2f7fd2" strokeWidth="1.500" />
    <path d="M472 128 313 620" stroke="#77706a" strokeWidth="1.300" strokeDasharray="7 7" />
    <path d="M330 334 357 293" stroke="#8c9a84" strokeDasharray="3 3" />
    <path d="M302 128v492M113 437.500h598" stroke="#a39a83" strokeDasharray="4 4" />

    <text x="162" y="327" fill="#54b158">50.00% (27,263.00)</text>
    <text x="162" y="451" fill="#3dab5b">61.80% (27,225.50)</text>

    {candles.map(([x, high, top, bottom, low, filled]) => (
      <g key={x}>
        <path d={`M${x} ${high}V${low}`} stroke="#1c150c" strokeWidth="0.900" />
        <rect
          x={x - 1.4}
          y={top}
          width="2.800"
          height={bottom - top}
          fill={filled ? "#000" : "#fff"}
          stroke="#000"
          strokeWidth={filled ? 0.6 : 0.8}
        />
      </g>
    ))}
    <path
      d="M113 333 120 352 125 372 133 405 148 462 157 480 163 490 172 505 180 516 188 519 198 513 207 493 217 487H223L228 475 243 457 250 430 257 390 267 338 273 302 283 253Q287 244 293 248L303 258 310 282 315 298 320 312Q326 320 333 312L350 297 358 289"
      fill="none"
      stroke="#6aa5cd"
    />
    <path d="M302 430v17M294 438.500h16" stroke="#3b8ca6" strokeWidth="1.300" />

    {/* trading view badge */}
    <circle cx="132" cy="601" r="11" fill="#fff" />
    <path d="M125 598h7v7h-3v-4h-4zM138 598h3.500l-3 7H135z" fill="#000" />
    <circle cx="134.500" cy="599.500" r="1.500" />

    {/* order lines */}
    <g fontWeight="700" fontSize="7" fontFamily="'DejaVu Sans', sans-serif">
      <rect x="595" y="346" width="55" height="13" fill="#10f01a" stroke="#174d18" />
      <path d="M598.500 349v7M636.500 346v13" stroke="#1a7a1c" />
      <text x="603" y="355" fill="#0c4a10">$109.50</text>
      <text x="641" y="355" fill="#0c4a10">3</text>
      <rect x="507" y="424.500" width="66" height="13" fill="#e10712" stroke="#711016" />
      <path d="M510.500 427v8M559.500 427v8" stroke="#98101a" />
      <text x="516" y="433" fill="#7f0710">— $141.00</text>
      <text x="564" y="433" fill="#7f0710">3</text>
    </g>
    <g fill="#fff" stroke="#333">
      <path d="M650 346h13v13h-13zM573 424.500h13v13h-13z" />
      <path d="m653.500 349.500 6 6m0-6-6 6M576.500 428l6 6m0-6-6 6" stroke="#111" strokeWidth="1.300" />
    </g>

    {/* axes */}
    <rect x="711" y="128" width="48" height="511" fill="#fce8a8" />
    <rect x="113" y="620" width="646" height="19" fill="#fce8a8" />
    <g fill="#3c3018">
      {priceTicks.map(([price, y]) => (
        <text key={price} x="716" y={y + 3}>{`27,${price}.00`}</text>
      ))}
      {timeTicks.map(([x, label, strong]) => (
        <text key={label} x={x} y="633" textAnchor="middle" fontWeight={strong ? 700 : 400} fill={strong ? "#1c150c" : "#3c3018"}>
          {label}
        </text>
      ))}
    </g>
    <rect x="712" y="276" width="44" height="11" fill="#2f96ec" />
    <rect x="712" y="287" width="44" height="21" fill="#fff" />
    <rect x="685" y="287" width="26" height="12" fill="#fff" />
    <rect x="712" y="347" width="44" height="12" fill="#15f41b" />
    <rect x="712" y="425" width="44" height="8" fill="#2d51e0" />
    <rect x="712" y="440" width="44" height="8" fill="#c90812" />
    <text x="716" y="433.500" fill="#fff">27,231.00</text>
    <rect x="698" y="431" width="58" height="13" fill="#0f1420" />
    <rect x="712" y="575" width="44" height="12" fill="#2d51e0" />
    <g fill="#fff" fontWeight="700">
      <text x="716" y="284">27,274.06</text>
      <text x="716" y="440.500">27,229.00</text>
      <text x="716" y="584">27,185.50</text>
    </g>
    <g fill="#222">
      <text x="688" y="296">/MNQ</text>
      <text x="716" y="295.500">27,272.75</text>
      <text x="716" y="305" fill="#555">00:06</text>
      <text x="716" y="356" fill="#0c5a10">27,254.50</text>
    </g>
    <circle cx="704.500" cy="437.500" r="4.500" fill="none" stroke="#dfe3ea" />
    <path d="M702 437.500h5M704.500 435v5" stroke="#dfe3ea" />
    <rect x="250" y="621" width="105" height="16" fill="#0f1420" />
    <text x="255" y="633" fill="#fff" fontWeight="700">
      {"Thu 30 Apr '26\u00a0\u00a002:44 AM"}
    </text>
    <path d="m733 626 5 0 3 4.500-3 4.500h-5l-3-4.500z" fill="none" stroke="#4d3f20" />
    <circle cx="735.500" cy="630.500" r="1.500" fill="none" stroke="#4d3f20" />
  </svg>
);

const drawToolGroups = [
  ["trend", "fib", "pattern", "channel", "rect", "text", "smile"],
  ["ruler", "zoom"],
  ["magnet*", "pencilLock", "lock", "eye", "link*"],
  ["trash"],
];

const Chart = () => (
  <ChartPanel>
    <PanelTabs>
      <PanelTab>
        Chart <em>X</em>
      </PanelTab>
      <PanelControls />
    </PanelTabs>
    <ChartToolbar>
      <SymbolButton>
        <Search size={10} /> /MNQ
      </SymbolButton>
      <CirclePlus size={14} strokeWidth={1.5} />
      <ToolbarGroup $line $gap={7}>
        {["15s", "30s", "1m", "5m", "15m", "30m", "1h", "4h", "D", "W"].map((t) => (
          <TextButton key={t} $on={t === "1m"}>
            {t}
          </TextButton>
        ))}
        <ChevronDown size={9} />
      </ToolbarGroup>
      <ToolbarGroup $line $gap={11}>
        <BarsIcon />
        <CandleIcon />
        <ChevronDown size={9} />
      </ToolbarGroup>
      <ToolbarGroup $line $gap={11}>
        <svg width="14" height="14" viewBox="0 0 14 14" fill="none" stroke="currentColor">
          <path d="M8 2Q5.500 0 5 4L4 11q-.5 2-2.500 1M3 5.500h4M8 8.500l4 4M12 8.500l-4 4" />
        </svg>
        <svg width="14" height="14" viewBox="0 0 14 14" fill="none" stroke="currentColor">
          <path d="M2 1.500h3.500v4H2zM8.500 1.500H12v4H8.500zM2 8.500h3.500v4H2zM8.500 8.500H12v4H8.500z" />
        </svg>
      </ToolbarGroup>
      <ToolbarGroup $line>
        <TextButton>
          <Settings size={8} /> Preferences
        </TextButton>
      </ToolbarGroup>
      <ToolbarGroup $line>
        <TextButton>
          <Link2 size={10} /> Add Chart Link
        </TextButton>
      </ToolbarGroup>
      <ToolbarGroup $line $gap={14}>
        <Undo2 size={12} strokeWidth={1.5} />
        <Redo2 size={12} strokeWidth={1.5} color="#777" />
      </ToolbarGroup>
      <ScreenBox aria-label="Layout setup" />
    </ChartToolbar>
    <ChartBody>
      <DrawTools>
        <DrawTool aria-label="cross">
          <DrawIcon name="cross" color="#b58a55" />
        </DrawTool>
        {drawToolGroups.map((group, i) => (
          <React.Fragment key={i}>
            {i > 0 && <DrawLine />}
            {group.map((entry) => {
              const name = entry.replace("*", "");
              return (
                <DrawTool key={name} $on={entry !== name} aria-label={name}>
                  <DrawIcon name={name} />
                </DrawTool>
              );
            })}
          </React.Fragment>
        ))}
        <ToolSpace />
        <DrawTool $on aria-label="Favourites">
          <DrawIcon name="star" />
        </DrawTool>
        <DrawTool aria-label="Object tree">
          <DrawIcon name="layers" size={16} />
        </DrawTool>
      </DrawTools>
      <ChartColumn>
        <Plot>
          <ChartDrawing />
          <Legend>
            <LegendRow>
              <b>MNQM26 · 1</b>
              <i />
              <span>O27,263.50</span>
              <span>H27,271.50</span>
              <span>L27,262.75</span>
              <span>C27,270.25</span>
              <span>+6.25 (+0.02%)</span>
              <span>Vol398</span>
            </LegendRow>
            <LegendRow>
              <span>MA 9 close 0</span>
              <em>27,282.64</em>
            </LegendRow>
            <CollapseLegend aria-label="Collapse legend">
              <svg width="7" height="4" viewBox="0 0 7 4" fill="none" stroke="currentColor">
                <path d="M1 3.500 3.500 1 6 3.500" />
              </svg>
            </CollapseLegend>
          </Legend>
          <FloatingTools>
            <svg width="6" height="12" viewBox="0 0 6 12" fill="#666">
              <path d="M0 1h1v1H0zM4 1h1v1H4zM0 5h1v1H0zM4 5h1v1H4zM0 9h1v1H0zM4 9h1v1H4z" />
            </svg>
            <DrawIcon name="trend" />
            <DrawIcon name="profile" />
            <DrawIcon name="rect" />
            <DrawIcon name="ray" />
            <DrawIcon name="channel" />
            <DrawIcon name="channel" />
            <Tooltip>
              <b>Position Bracket</b>
              Enabled
            </Tooltip>
          </FloatingTools>
        </Plot>
        <RangeBar>
          <ToolbarGroup $gap={7}>
            {["1yr", "3m", "1m", "5d", "3d", "1d"].map((t) => (
              <TextButton key={t}>{t}</TextButton>
            ))}
          </ToolbarGroup>
          <ToolbarGroup $line>
            <svg width="14" height="14" viewBox="0 0 14 14" fill="none" stroke="currentColor">
              <path d="M2 6V2.500h10v9H9M2 5h10M4.500 1v3M9.500 1v3M1 10.500h6M5 8.500l2 2-2 2" />
            </svg>
          </ToolbarGroup>
          <RangeEnd>
            <span>02:58:53 AM UTC-4</span>
            <span>ETH</span>
          </RangeEnd>
          <ToolbarGroup $line $gap={8}>
            <span>%</span>
            <span>log</span>
            <TextButton $on>auto</TextButton>
          </ToolbarGroup>
        </RangeBar>
      </ChartColumn>
    </ChartBody>
  </ChartPanel>
);

const ContractField = ({ id }) => (
  <FieldBox>
    <legend>
      <label htmlFor={id}>Contract</label>
    </legend>
    <FieldRow>
      <GreenSquare />
      <PlainSelect id={id}>
        <option>MNQM26</option>
      </PlainSelect>
      <Caret />
    </FieldRow>
  </FieldBox>
);

const PositionControls = ({ id, account, selected, wide }) => (
  <>
    <Limited $w={wide ? 175 : 170} $mt={wide ? 5 : 10}>
      <PickerBox $w={wide ? 175 : 170}>
        <label htmlFor={`${id}-account`}>50K DLL COMBINE</label>
        <PlainSelect id={`${id}-account`}>
          <option>{account}</option>
        </PlainSelect>
        <Caret />
      </PickerBox>
    </Limited>
    <Limited $w={153} $mt={wide ? 4 : 11} $gap={6}>
      <FormLine $gap={6}>
        <PositionText>+3 @ 27,254.50</PositionText>
        <OpenPnl>UP&L $109.50</OpenPnl>
        <BreakEven>B/E</BreakEven>
      </FormLine>
      <FormLine $gap={4}>
        <QtyButton $minus>-</QtyButton>
        {[1, 3, 5, 10, 15].map((n) => (
          <QtyButton key={n} $on={n === selected}>
            {n}
          </QtyButton>
        ))}
        <QtyButton $plus>+</QtyButton>
      </FormLine>
    </Limited>
    <Limited $w={170} $mt={8}>
      <FormLine $gap={7}>
        <FieldBox $dim $short>
          <legend>
            <label htmlFor={`${id}-bracket`}>Position Bracket</label>
          </legend>
          <FieldRow $short $size={9}>
            <PlainSelect id={`${id}-bracket`}>
              <option>Enabled</option>
            </PlainSelect>
            <Caret />
          </FieldRow>
        </FieldBox>
        <GearButton aria-label="Bracket settings">
          <MdSettings size={12} />
        </GearButton>
      </FormLine>
    </Limited>
  </>
);

const Order = () => (
  <Panel>
    <PanelTabs>
      <PanelTab>
        <BlueDot />
        <HBox>H</HBox> Order <em>X</em>
      </PanelTab>
      <PanelControls />
    </PanelTabs>
    <OrderForm>
      <FormLine $gap={9}>
        <ContractField id="order-contract" />
        <GearButton $end={5} aria-label="Order settings">
          <MdSettings size={12} />
        </GearButton>
      </FormLine>
      <FieldBox>
        <legend>
          <label htmlFor="order-type">Order Type</label>
        </legend>
        <FieldRow>
          <PlainSelect id="order-type">
            <option>Market</option>
          </PlainSelect>
          <Caret />
        </FieldRow>
      </FieldBox>
      <FieldBox>
        <legend>
          <label htmlFor="order-size"># of Contracts</label>
        </legend>
        <FieldRow>
          <PlainInput id="order-size" defaultValue="3" />
        </FieldRow>
      </FieldBox>
    </OrderForm>
    <Limited $w={151} $mt={12}>
      <FormLine $justify="space-between">
        <Quote>Bid: 27,272.75</Quote>
        <LastPrice>
          <b>27,272.75</b>
          0.50
        </LastPrice>
        <Quote $ask>Ask: 27,273.25</Quote>
      </FormLine>
    </Limited>
    <PositionControls id="order" account="| 50KTC-V2-DLL-2178..." selected={3} />
    <Limited $w={168} $mt={13}>
      <FormLine $gap={3}>
        <ActionButton $bg="#46a54b">BUY +3 @ MARKET</ActionButton>
        <ActionButton $bg="#b52f3c">SELL -3 @ MARKET</ActionButton>
      </FormLine>
    </Limited>
  </Panel>
);

const TimeAndSales = () => (
  <Panel>
    <PanelTabs>
      <PanelTab>
        <BlueDot />
        Time and Sales <em>X</em>
      </PanelTab>
      <PanelControls />
    </PanelTabs>
    <SalesTop>
      <ContractField id="sales-contract" />
      <FieldBox $short>
        <legend>
          <label htmlFor="sales-filter">Size Filter</label>
        </legend>
        <FieldRow $short $size={9}>
          <PlainInput id="sales-filter" defaultValue="5" />
        </FieldRow>
      </FieldBox>
      <GearButton aria-label="Sales settings">
        <MdSettings size={12} />
      </GearButton>
    </SalesTop>
    <SalesArea>
      <SalesTable>
        <thead>
          <tr>
            <th>Trade Time</th>
            <th>
              <span>
                Price <MdHelp size={8} />
              </span>
            </th>
            <th>Size</th>
          </tr>
        </thead>
        <tbody>
          {trades.map(([time, price, size, up], i) => (
            <tr key={i}>
              <td>{time}</td>
              <SalesPrice $up={up}>{price}</SalesPrice>
              <td>{size}</td>
            </tr>
          ))}
        </tbody>
      </SalesTable>
      <ScrollTrack $thumb={96}>
        <i />
      </ScrollTrack>
    </SalesArea>
  </Panel>
);

const DepthOfMarket = () => {
  const view = useRef(null);

  // start part of a row down the ladder
  useEffect(() => {
    view.current.scrollTop = 7;
  }, []);

  return (
    <Panel>
      <PanelTabs>
        <PanelTab>
          <BlueDot />
          <HBox>H</HBox> DOM <em>X</em>
        </PanelTab>
        <PanelControls />
      </PanelTabs>
      <DomTop>
        <ContractField id="dom-contract" />
        <GearButton aria-label="DOM settings">
          <MdSettings size={12} />
        </GearButton>
        <svg width="16" height="14" viewBox="0 0 16 14" fill="none" stroke="#777">
          <path d="M1 12 4 3l3 9M2 9h4M9 7.500h6M12 2v4M12 9v4" strokeWidth="1.300" />
        </svg>
        <svg width="13" height="14" viewBox="0 0 13 14" fill="none" stroke="#eee">
          <path d="M1 7.500h10M6 2v4M6 9v4" strokeWidth="1.500" />
        </svg>
      </DomTop>
      <DomHead>
        <thead>
          <tr>
            {["MY BID", "BID SIZE", "PRICE", "ASK SIZE", "MY ASK", "P&L", "VOL PRO."].map((t) => (
              <th key={t}>{t}</th>
            ))}
          </tr>
        </thead>
      </DomHead>
      <DomScroll>
        <DomView ref={view}>
          <DomTable>
            <tbody>
              {ladder.map((row) => (
                <tr key={row.price}>
                  <td />
                  <td />
                  <td>{row.price}</td>
                  <td />
                  <td />
                  <td>
                    <Pnl>{row.pnl}</Pnl>
                  </td>
                  <td>
                    <Volume style={{ width: `${(row.volume / 1137) * 100}%` }}>
                      {row.volume.toLocaleString("en-US")}
                    </Volume>
                  </td>
                </tr>
              ))}
            </tbody>
          </DomTable>
        </DomView>
        <ScrollTrack $top={169} $thumb={21}>
          <i />
        </ScrollTrack>
      </DomScroll>
      <PositionControls id="dom" account="| 50KTC-V2-DLL-217844..." selected={1} wide />
      <Limited $w={168} $mt={13} $gap={3}>
        <FormLine $gap={4}>
          <ActionButton $bg="#46a54b">BUY +1 MARKET</ActionButton>
          <ActionButton $bg="#b52f3c">SELL -1 MARKET</ActionButton>
        </FormLine>
        <FormLine $gap={4}>
          <ActionButton>JOIN BID</ActionButton>
          <ActionButton>JOIN ASK</ActionButton>
        </FormLine>
        <FormLine $gap={4}>
          <ActionButton $grow="51 1 0">CLOSE POSITION</ActionButton>
          <ActionButton $grow="58 1 0">REVERSE POSITION</ActionButton>
          <ActionButton $grow="51 1 0">CANCEL ORDERS</ActionButton>
        </FormLine>
        <FormLine $gap={4}>
          <ActionButton>FLATTEN ALL</ActionButton>
          <ActionButton>CANCEL ALL</ActionButton>
        </FormLine>
      </Limited>
    </Panel>
  );
};

const TopstepTv = () => (
  <Panel>
    <PanelTabs>
      <PanelTab>
        TopstepTV <em>X</em>
      </PanelTab>
      <PanelControls />
    </PanelTabs>
    <VideoStrip>
      <VideoGhost>Market</VideoGhost>
      <VideoPlay>
        <svg width="12" height="12" viewBox="0 0 12 12">
          <path d="M1 0v12l11-6z" fill="#f2dada" />
        </svg>
      </VideoPlay>
      <WatchOn>
        Watch on <i /> YouTube
      </WatchOn>
      <VideoTitle>TopstepTV: Slow Markets with Dakota - Live</VideoTitle>
    </VideoStrip>
  </Panel>
);

const accountColumns = [
  ["Contract", 80], ["Last", 65], ["Change", 42], ["% Chg", 52], ["Open", 62], ["Bid", 60],
  ["Ask", 58], ["High", 61], ["Low", 55], ["Volume", 61], ["R", 12],
];

const Accounts = () => (
  <Panel>
    <PanelTabs>
      {["Accounts", "Positions", "Orders", "Trades"].map((name) => (
        <PanelTab $plain key={name}>
          {name} <em>X</em>
        </PanelTab>
      ))}
      <PanelControls />
    </PanelTabs>
    <AccountsTable>
      <colgroup>
        {accountColumns.map(([name, width]) => (
          <col key={name} width={width} />
        ))}
      </colgroup>
      <thead>
        <tr>
          {accountColumns.map(([name]) => (
            <th key={name}>{name}</th>
          ))}
        </tr>
      </thead>
    </AccountsTable>
  </Panel>
);

const KwyadevonMark = () => (
  <Watermark>
    <svg width="32" height="24" viewBox="0 0 32 24">
      <rect x="1" y="1" width="30" height="22" rx="7" fill="#e3111d" stroke="#fff" strokeWidth="1.500" />
      <path d="M12 7v10l9-5z" fill="#fff" />
    </svg>
    <svg width="27" height="28" viewBox="0 0 26 28">
      <path d="M6 2h18v14l-6 6h-4l-4 5v-5H3V7z" fill="#6a35c9" stroke="#fff" strokeWidth="1.500" />
      <path d="M8 5h13v10l-4 4h-4l-3 3v-3H8z" fill="#fff" />
      <path d="M12 9v5M17 9v5" stroke="#6a35c9" strokeWidth="2" />
    </svg>
    <WatermarkK>K</WatermarkK>
    <WatermarkText>WYADEVON</WatermarkText>
  </Watermark>
);

const App = () => (
  <Shell>
    <GlobalStyle />
    <BrowserTop />
    <Body>
      <OperaSidebar />
      <TopstepSidebar />
      <Main>
        <AppTopBar />
        <Workspace>
          <LeftSide>
            <UpperRow>
              <Chart />
              <SideColumn>
                <Order />
                <TimeAndSales />
              </SideColumn>
            </UpperRow>
            <LowerRow>
              <TopstepTv />
              <Accounts />
            </LowerRow>
          </LeftSide>
          <DepthOfMarket />
        </Workspace>
        <Footer>
          <span>Version: 1.24.8</span>
          <span>Licensed to Topstep & powered by TopstepX. Copyright 2024-2026</span>
        </Footer>
      </Main>
    </Body>
    <KwyadevonMark />
  </Shell>
);

export default App;
